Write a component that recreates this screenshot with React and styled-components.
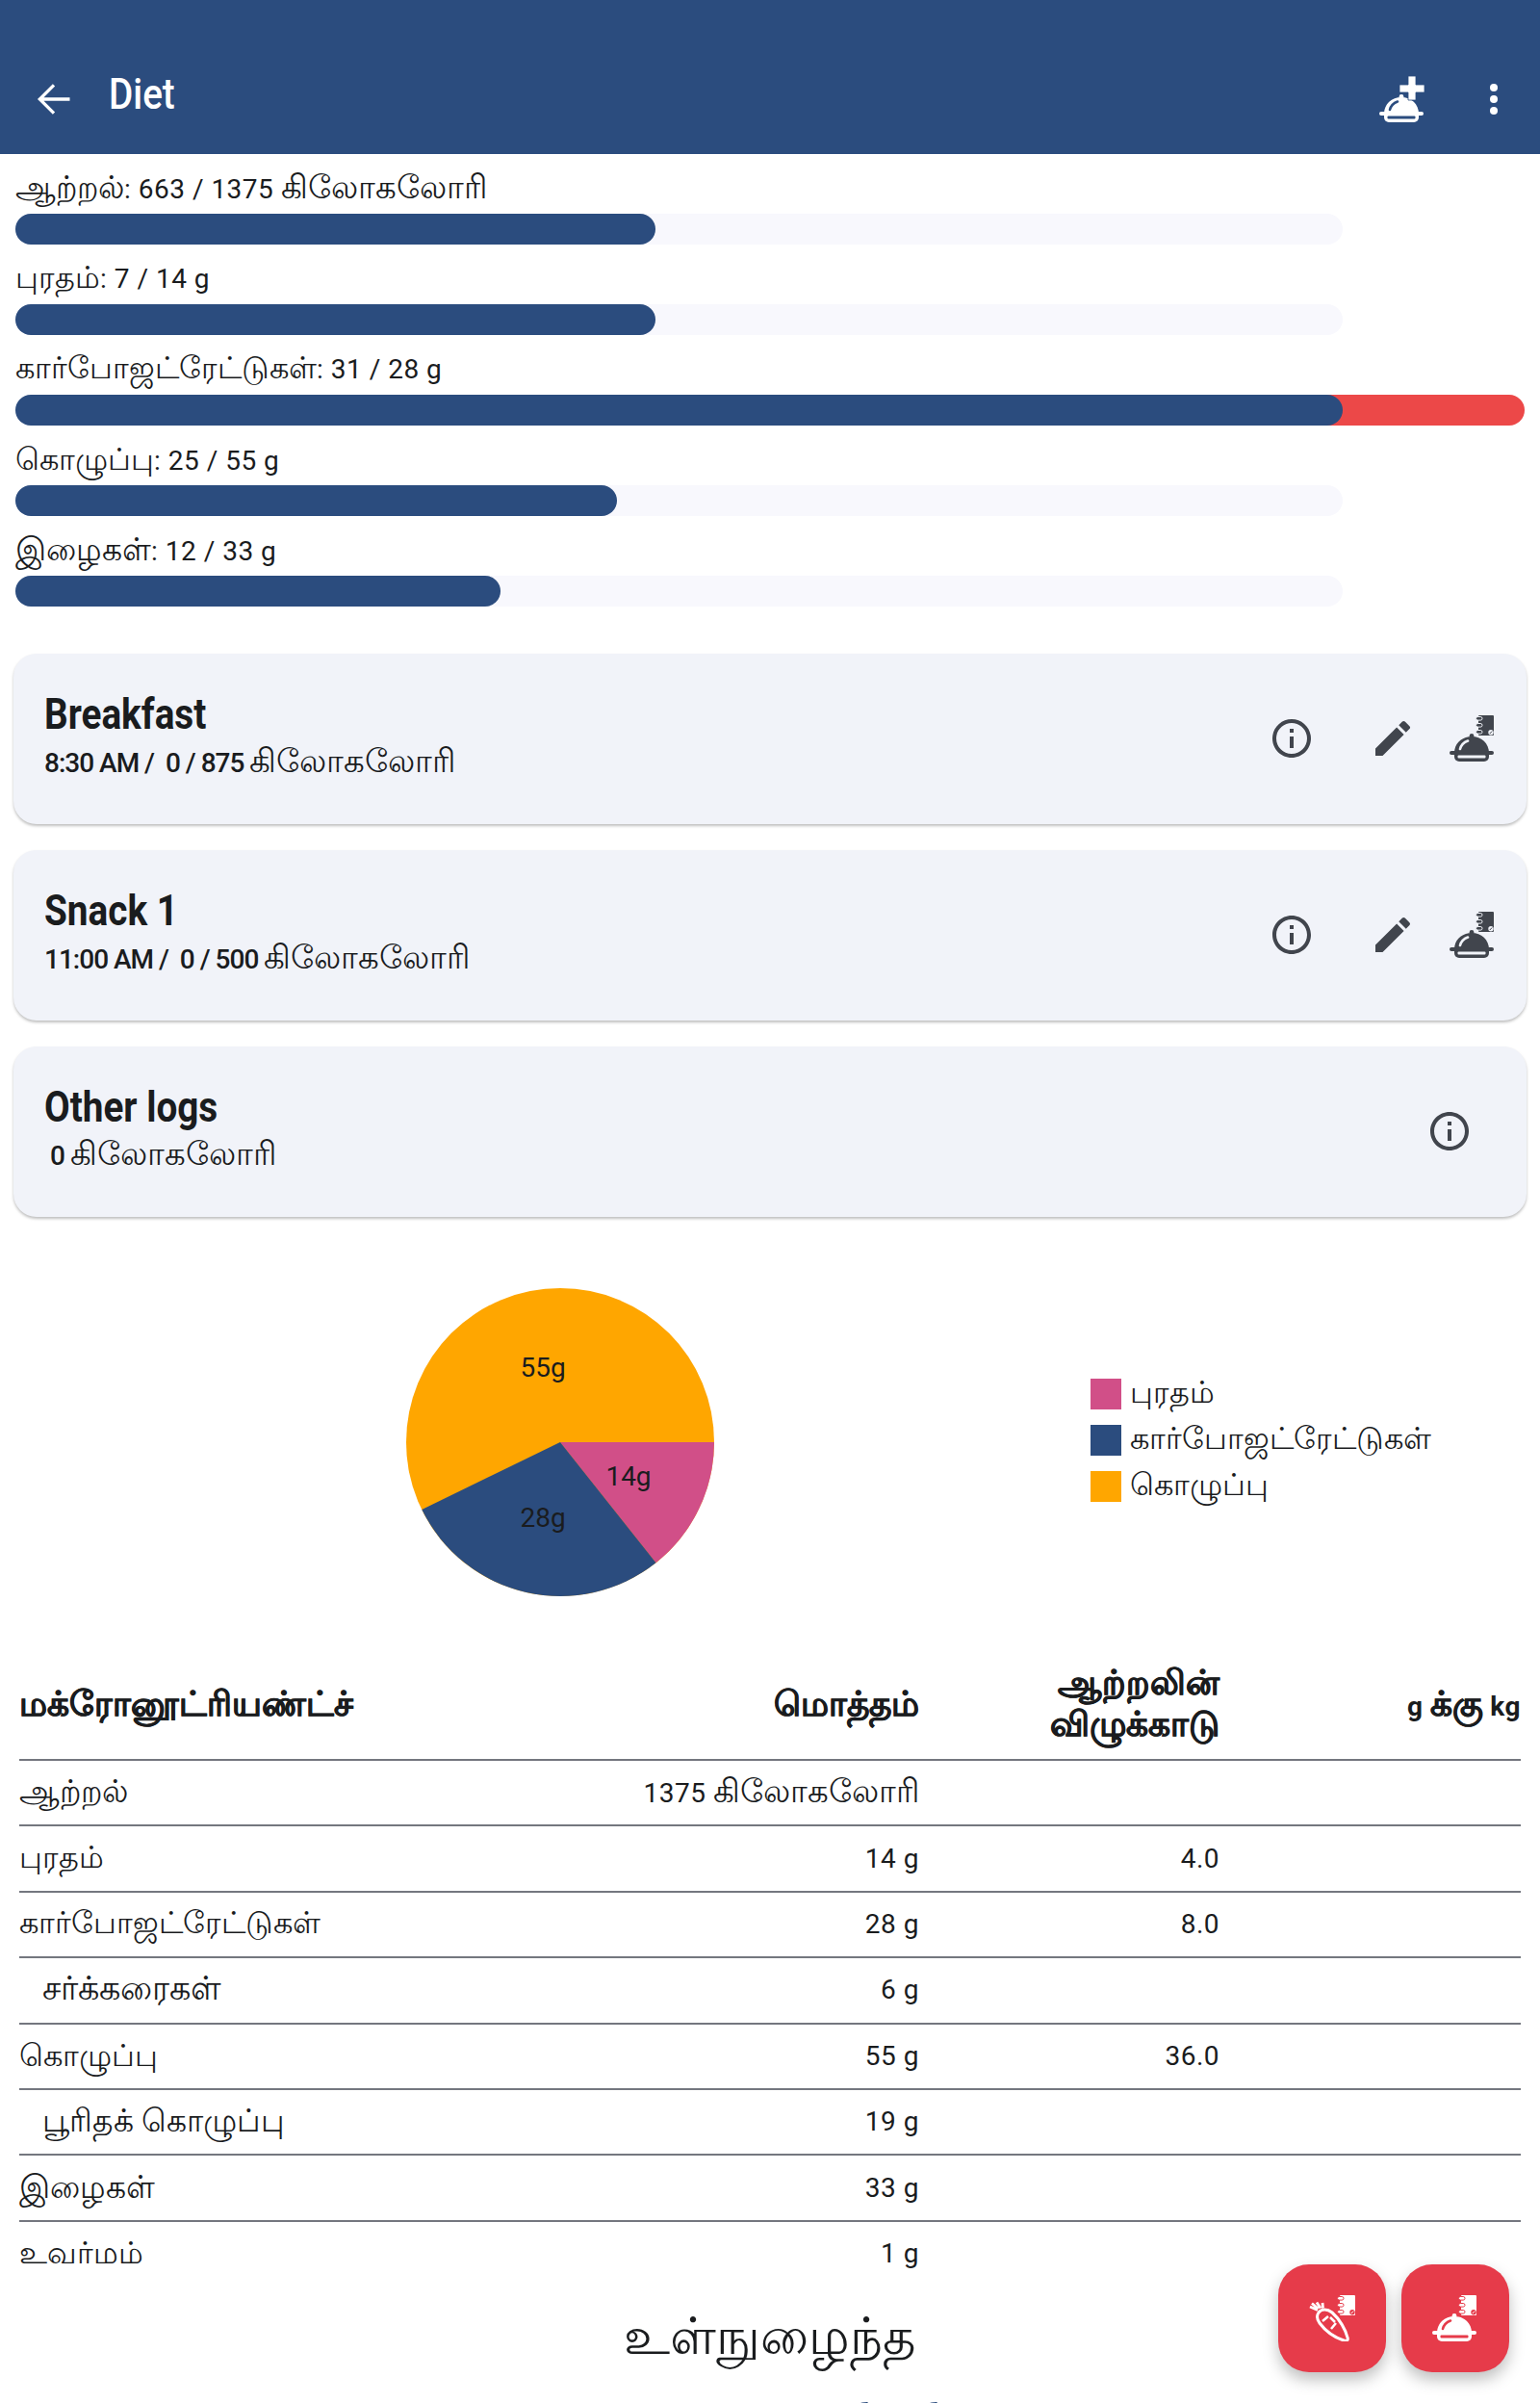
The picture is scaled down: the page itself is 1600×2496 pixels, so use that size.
import React from "react";
import styled, { createGlobalStyle } from "styled-components";

const Global = createGlobalStyle`
  html, body { margin: 0; padding: 0; background: #fff; }
  body { height: 2496px; overflow: hidden; font-family: Roboto, "Noto Sans", sans-serif; color: #1a1c1e; }
  #root { position: relative; height: 2496px; overflow: hidden; }
`;

const NAVY = "#2b4c7e";
const CARD = "#f1f3f9";
const RED = "#e63b4a";

const EM = {
  "கிலோகலோரி": 1.21, "கார்போஜட்ரேட்டுகள்": 1.135, "சர்க்கரைகள்": 1.25, "கொழுப்பு": 1.14,
  "ஆற்றல்": 1.19, "புரதம்": 1.13, "இழைகள்": 1.19, "உவர்மம்": 1.14,
};

const Ta = styled.span`
  font-size: ${p => p.$em}em;
  letter-spacing: 0;
  font-weight: ${p => p.$w || "inherit"};
  -webkit-text-stroke: ${p => p.$heavy ? ".6px" : "0"};
`;
const T = ({ children, em, w, heavy }) =>
  children.split(/([\u0B80-\u0BFF]+(?:\s+[\u0B80-\u0BFF]+)*)/).map((part, i) =>
    i % 2 ? <Ta key={i} $em={em || EM[part] || 1.17} $w={w} $heavy={heavy}>{part}</Ta> : part
  );

const Header = styled.header`
  height: 160px; background: ${NAVY}; display: flex; align-items: flex-end; box-sizing: border-box;
  padding: 0 0 35px 34px; color: #fff;
`;
const Title = styled.h1`
  margin: 0 0 1px 35px; font-size: 45px; line-height: 52px; font-weight: 500; transform: scaleX(.86); transform-origin: left;
`;
const HeaderActions = styled.div`
  margin: 0 0 -2px auto; display: flex; align-items: center; gap: 63px; padding: 0 40px 0 0;
`;
const Bars = styled.section`padding: 11px 16px 0; height: 519px; box-sizing: border-box;`;
const BarRow = styled.div`height: 94px;`;
const BarLabel = styled.div`font-size: 28px; letter-spacing: .5px; line-height: 48px; height: 51px;`;
const Track = styled.div`
  position: relative; width: 1379px; height: 32px; background: #f8f8fd; border-radius: 16px;
`;
const Fill = styled.div`height: 32px; background: ${NAVY}; border-radius: 16px; position: relative; z-index: 1;`;
const Over = styled.div`
  position: absolute; left: 1300px; top: 0; height: 32px; width: 268px; background: #ec4848; border-radius: 0 16px 16px 0;
`;
const Cards = styled.section`padding: 0 14px; display: flex; flex-direction: column; gap: 27px;`;
const Card = styled.article`
  height: 177px; box-sizing: border-box; background: ${CARD}; border-radius: 24px;
  box-shadow: 0 2px 3px rgba(0,0,0,.25); padding: 37px 32px 0 32px; display: flex;
`;
const CardText = styled.div`flex: 1;`;
const CardTitle = styled.div`
  font-size: 45px; line-height: 52px; font-weight: 700; transform: scaleX(.86); transform-origin: left;
`;
const CardSub = styled.div`
  font-size: 28px; line-height: 36px; margin-top: 5px; font-weight: 500; letter-spacing: -1px; white-space: pre;
`;
const CardIcons = styled.div`
  display: flex; align-items: center; gap: 35px; height: 102px; color: #41454d; padding-right: ${p => p.$end || 0}px;
`;
const InfoSlot = styled.div`display: flex; margin-right: ${p => p.$gap || 0}px;`;
const Chart = styled.section`height: 464px; position: relative; display: flex;`;
const PieBox = styled.svg`position: absolute; left: 0; top: 0;`;
const Legend = styled.div`margin: 168px 0 0 1133px; display: flex; flex-direction: column; gap: 16px;`;
const LegendItem = styled.div`display: flex; align-items: center; gap: 9px; font-size: 31.5px; height: 32px;`;
const Swatch = styled.span`width: 32px; height: 32px; background: ${p => p.$c};`;
const Table = styled.table`
  margin-left: 20px; width: 1560px; border-collapse: collapse; table-layout: fixed; font-size: 28px; line-height: 36px; letter-spacing: .5px;
`;
const Th = styled.th`
  font-weight: 700; text-align: ${p => p.$left ? "left" : "right"}; height: 78px; padding: 0 0 13px;
  border-bottom: 2px solid #74777f; line-height: 40px;
`;
const Td = styled.td`
  text-align: ${p => p.$left ? "left" : "right"}; height: 66.4px; padding: 0 0 0 ${p => p.$indent ? "24px" : "0"};
  border-bottom: ${p => p.$last ? "0" : "2px solid #74777f"};
`;
const Heading = styled.h2`
  margin: 21px 0 0; text-align: center; font-size: 53px; line-height: 64px; font-weight: 400;
`;
const CutValue = styled.div`
  color: ${NAVY}; font-size: 58px; line-height: 68px; letter-spacing: 39px; margin: 23px 0 0 877px; font-weight: 500;
`;
const Fabs = styled.div`position: absolute; left: 1328px; top: 2352px; display: flex; gap: 16px;`;
const Fab = styled.button`
  width: 112px; height: 112px; border: 0; border-radius: 32px; background: ${RED}; color: #fff; padding: 0;
  box-shadow: 0 8px 16px rgba(0,0,0,.25); display: flex; align-items: center; justify-content: center;
`;

const Cloche = ({ y = 0, c }) => (
  <g transform={`translate(0 ${y})`} fill="currentColor">
    <circle cx="23" cy="2.4" r="2.4" />
    <path d="M5 20C5 10 13 3 23 3s18 7 18 17Z" />
    <rect x="0" y="18" width="46" height="4" rx="2" />
    <path d="M5 21h36v3a5 5 0 0 1-5 5H10a5 5 0 0 1-5-5Z" />
    <rect x="8.5" y="22.6" width="29" height="3" rx="1" fill={c} />
    <path d="M11 16c1-4 4-7 8-8.500" stroke={c} strokeWidth="2.600" fill="none" strokeLinecap="round" />
  </g>
);
const Book = ({ x, y, c }) => (
  <g transform={`translate(${x} ${y})`}>
    <rect x="3" y="0" width="16" height="21" rx="1" fill="currentColor" />
    {[1.5, 8.5, 15.5].map(r => (
      <rect key={r} x="0.500" y={r} width="6.500" height="3.600" rx="1.800" fill="currentColor" stroke={c} strokeWidth="1" />
    ))}
    <circle cx="16" cy="17.800" r="2.700" fill={c} />
    <path d="M14.800 19l2.400-2.500" stroke="currentColor" strokeWidth="1" />
  </g>
);
const ClocheBook = ({ c, color }) => (
  <svg width="48" height="48" viewBox="0 0 48 48" color={color} aria-hidden="true">
    <Cloche y={19} c={c} />
    <Book x={27} y={0} c={c} />
  </svg>
);
const Info = () => (
  <svg width="48" height="48" viewBox="0 0 24 24" fill="currentColor" aria-hidden="true">
    <path d="M11 7h2v2h-2zm0 4h2v6h-2zm1-9C6.48 2 2 6.48 2 12s4.48 10 10 10 10-4.48 10-10S17.52 2 12 2zm0 18c-4.41 0-8-3.59-8-8s3.59-8 8-8 8 3.59 8 8-3.59 8-8 8z" />
  </svg>
);
const Pencil = () => (
  <svg width="48" height="48" viewBox="0 0 24 24" fill="currentColor" aria-hidden="true">
    <path d="M3 17.25V21h3.75L17.81 9.94l-3.75-3.75L3 17.25zM20.71 7.04a1 1 0 0 0 0-1.41l-2.34-2.34a1 1 0 0 0-1.41 0l-1.83 1.83 3.75 3.75 1.83-1.830z" />
  </svg>
);

const bars = [
  ["ஆற்றல்: 663 / 1375 கிலோகலோரி", 665],
  ["புரதம்: 7 / 14 g", 665],
  ["கார்போஜட்ரேட்டுகள்: 31 / 28 g", 1379, true],
  ["கொழுப்பு: 25 / 55 g", 625],
  ["இழைகள்: 12 / 33 g", 504],
];
const rows = [
  ["ஆற்றல்", "1375 கிலோகலோரி", ""],
  ["புரதம்", "14 g", "4.0"],
  ["கார்போஜட்ரேட்டுகள்", "28 g", "8.0"],
  ["சர்க்கரைகள்", "6 g", "", true],
  ["கொழுப்பு", "55 g", "36.0"],
  ["பூரிதக் கொழுப்பு", "19 g", "", true],
  ["இழைகள்", "33 g", ""],
  ["உவர்மம்", "1 g", ""],
];

export default function App() {
  return (
    <>
      <Global />
      <Header>
        <svg width="44" height="44" viewBox="0 0 24 24" fill="none" stroke="#fff" strokeWidth="1.800" aria-hidden="true">
          <path d="M21 12H4M12 4l-8 8 8 8" />
        </svg>
        <Title>Diet</Title>
        <HeaderActions>
          <svg width="48" height="48" viewBox="0 0 48 48" color="#fff" aria-hidden="true">
            <Cloche y={19} c={NAVY} />
            <path d="M21 9h9V0h8v9h9v8h-9v8h-8v-8h-9Z" fill="#fff" stroke={NAVY} strokeWidth="0.800" />
          </svg>
          <svg width="16" height="40" viewBox="0 0 16 40" fill="#fff" aria-hidden="true">
            <circle cx="8" cy="8" r="4" /><circle cx="8" cy="20" r="4" /><circle cx="8" cy="32" r="4" />
          </svg>
        </HeaderActions>
      </Header>
      <Bars>
        {bars.map(([t, w, over]) => (
          <BarRow key={t}>
            <BarLabel><T>{t}</T></BarLabel>
            <Track>
              {over && <Over />}
              <Fill style={{ width: w }} />
            </Track>
          </BarRow>
        ))}
      </Bars>
      <Cards>
        {[["Breakfast", "8:30 AM /  0 / 875 கிலோகலோரி"], ["Snack 1", "11:00 AM /  0 / 500 கிலோகலோரி"]].map(([t, s]) => (
          <Card key={t}>
            <CardText>
              <CardTitle>{t}</CardTitle>
              <CardSub><T w={400}>{s}</T></CardSub>
            </CardText>
            <CardIcons>
              <InfoSlot $gap={22}><Info /></InfoSlot>
              <Pencil />
              <ClocheBook c={CARD} />
            </CardIcons>
          </Card>
        ))}
        <Card>
          <CardText>
            <CardTitle>Other logs</CardTitle>
            <CardSub><T w={400}>{" 0 கிலோகலோரி"}</T></CardSub>
          </CardText>
          <CardIcons $end={24}><Info /></CardIcons>
        </Card>
      </Cards>
      <Chart>
        <PieBox width="1000" height="464" viewBox="0 0 1000 464" fontFamily="Roboto" fontSize="28" fill="#1a1c1e" textAnchor="middle">
          <g transform="translate(582 234)">
            <circle r="160" fill="#ffa600" />
            <path d="M0 0L160 0A160 160 0 0 1 99.5 125.3Z" fill="#d14f88" />
            <path d="M0 0L99.5 125.3A160 160 0 0 1 -143.7 70Z" fill={NAVY} />
            <text x="-18" y="-68">55g</text>
            <text x="-18" y="88">28g</text>
            <text x="71" y="45">14g</text>
          </g>
        </PieBox>
        <Legend>
          <LegendItem><Swatch $c="#d14f88" />புரதம்</LegendItem>
          <LegendItem><Swatch $c={NAVY} />கார்போஜட்ரேட்டுகள்</LegendItem>
          <LegendItem><Swatch $c="#ffa600" />கொழுப்பு</LegendItem>
        </Legend>
      </Chart>
      <Table>
        <colgroup><col style={{ width: 640 }} /><col style={{ width: 295 }} /><col style={{ width: 312 }} /><col style={{ width: 313 }} /></colgroup>
        <thead>
          <tr>
            <Th $left><T em={1.28} heavy>மக்ரோனூட்ரியண்ட்ச்</T></Th>
            <Th><T em={1.28} heavy>மொத்தம்</T></Th>
            <Th><T em={1.28} heavy>ஆற்றலின்</T><br /><T em={1.28} heavy>விழுக்காடு</T></Th>
            <Th><T em={1.28} heavy>g க்கு kg</T></Th>
          </tr>
        </thead>
        <tbody>
          {rows.map(([a, b, c, ind], i) => (
            <tr key={a}>
              <Td $left $indent={ind} $last={i === rows.length - 1}><T>{a}</T></Td>
              <Td $last={i === rows.length - 1}><T>{b}</T></Td>
              <Td $last={i === rows.length - 1}>{c}</Td>
              <Td $last={i === rows.length - 1} />
            </tr>
          ))}
        </tbody>
      </Table>
      <Heading>உள்நுழைந்த</Heading>
      <CutValue>66</CutValue>
      <Fabs>
        <Fab aria-label="carrot log">
          <svg width="48" height="48" viewBox="0 0 48 48" aria-hidden="true">
            <path d="M10 18C13 14 19 14 24 18C32 25 38 36 40 44C41 47 39 48 36 47C27 44 17 37 11 29C8 25 8 21 10 18Z" fill="none" stroke="#fff" strokeWidth="3" />
            <path d="M14 27l6-5M23 35l5-6M22 23l5 5" stroke="#fff" strokeWidth="2.500" fill="none" />
            <path d="M9 15.500L1 12M9.500 14L3 8.500M12 13.500L8 7.500M14.500 13.500L14 8" stroke="#fff" strokeWidth="2.800" fill="none" />
            <g color="#fff"><Book x={29} y={0} c={RED} /></g>
          </svg>
        </Fab>
        <Fab aria-label="meal log">
          <ClocheBook c={RED} color="#fff" />
        </Fab>
      </Fabs>
    </>
  );
}
